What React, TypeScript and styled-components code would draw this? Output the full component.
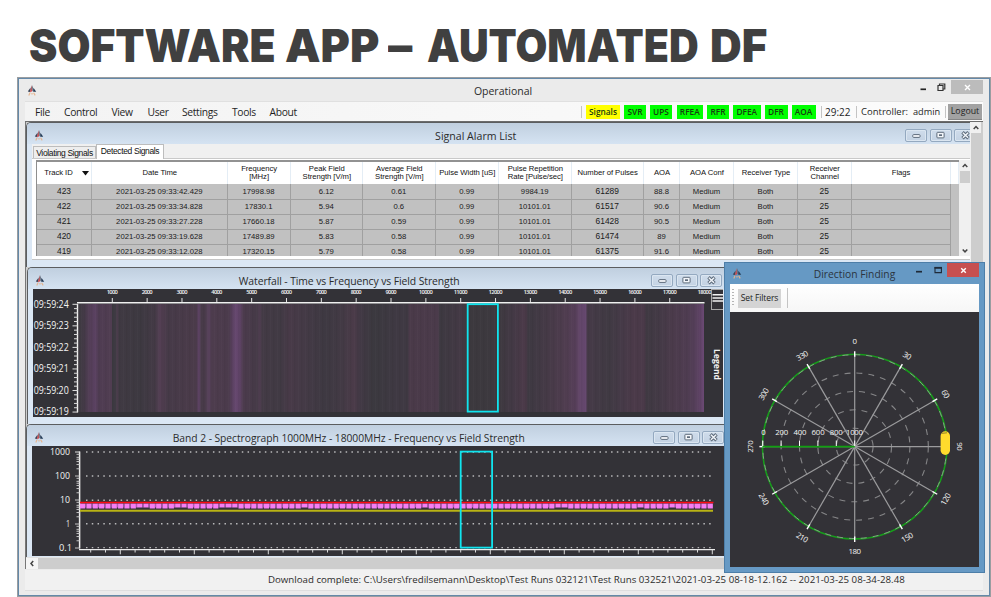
import React from "react";
import styled, { createGlobalStyle } from "styled-components";

const GlobalStyle = createGlobalStyle`
  * { box-sizing: border-box; }
  html, body { margin: 0; padding: 0; background: #fff; }
  body { width: 991px; height: 597px; overflow: hidden; font-family: "Open Sans", "Noto Sans", sans-serif; color: #2b2b2b; }
  svg { display: block; flex: none; }
`;

/* ---------- page ---------- */
const Slide = styled.div`
  width: 991px;
  height: 597px;
  display: flex;
  flex-direction: column;
  position: relative;
  overflow: hidden;
`;
const Heading = styled.h1`
  margin: 0;
  height: 77px;
  padding: 17px 0 0 29px;
  display: flex;
  font: 900 45px/58px Inter, sans-serif;
  color: #404040;
  white-space: pre;
`;
const Word = styled.span<{ $w: number; $scale: number }>`
  flex: none;
  width: ${(p) => p.$w}px;
  transform-origin: 0 50%;
  transform: scaleX(${(p) => p.$scale});
`;
const AppFrame = styled.div`
  margin-left: 17px;
  width: 974px;
  height: 520px;
  border: 1px solid #9a9da0;
  border-right-width: 2px;
  outline: 1px solid #6489a9;
  outline-offset: -2px;
  background: #ebebeb;
  padding: 2px 6px 0 7px;
  display: flex;
  flex-direction: column;
`;
const TitleBar = styled.div`
  height: 21px;
  display: flex;
  align-items: center;
`;
const CenterTitle = styled.div<{ $shift?: number; $size?: number; $space?: number; $top?: number }>`
  flex: 1;
  text-align: center;
  white-space: nowrap;
  font-size: ${(p) => p.$size ?? 10.6}px;
  letter-spacing: ${(p) => p.$space ?? 0}px;
  padding-left: ${(p) => p.$shift ?? 0}px;
  padding-top: ${(p) => p.$top ?? 0}px;
  line-height: 16px;
`;
const MainControls = styled.div`
  display: flex;
  align-self: flex-start;
`;
const MainClose = styled.div`
  width: 32px;
  height: 14px;
  background: #bcbcbc;
  display: grid;
  place-items: center;
`;
const MenuBar = styled.div`
  height: 20px;
  display: flex;
  align-items: center;
  background: linear-gradient(90deg, #f3f3f3, #fcfcfc);
  border-top: 1px solid #e0e0e0;
  padding-right: 1px;
  font-size: 10.3px;
  letter-spacing: -0.33px;
  color: #1f1f1f;
`;
const MenuItems = styled.div`
  display: grid;
  grid-template-columns: 29px 47.5px 36px 34.5px 50px 37.5px auto;
  padding-left: 10px;
  flex: 1;
`;
const StatusTools = styled.div`
  display: flex;
  align-items: center;
  height: 19px;
  letter-spacing: 0;
`;
const Badge = styled.span<{ $w: number; $gap: number; $warn?: boolean }>`
  width: ${(p) => p.$w}px;
  margin-right: ${(p) => p.$gap}px;
  height: 14px;
  background: ${(p) => (p.$warn ? "#ffff00" : "#00ff00")};
  color: #173d10;
  font-size: 8.3px;
  font-weight: 600;
  line-height: 13.5px;
  text-align: center;
  white-space: nowrap;
`;
const Divider = styled.i<{ $r: number; $h?: number }>`
  width: 1px;
  height: ${(p) => p.$h ?? 12}px;
  background: #c4c4c4;
  margin-right: ${(p) => p.$r}px;
`;
const ToolText = styled.span<{ $w: number; $size?: number }>`
  width: ${(p) => p.$w}px;
  font-size: ${(p) => p.$size ?? 10}px;
  white-space: nowrap;
`;
const Logout = styled.button`
  border: 0;
  border-bottom: 1px solid #858585;
  padding: 0;
  width: 34px;
  height: 16px;
  background: #a2a2a2;
  color: #222;
  font: 500 8.8px/14px "Open Sans", sans-serif;
`;

/* ---------- workspace ---------- */
const Workspace = styled.div`
  height: 448px;
  display: flex;
  background: #cdcdcd;
  border-top: 1px solid #6c6c6c;
  border-left: 1px solid #777;
`;
const Stack = styled.div`
  width: 944px;
  height: 447px;
  overflow: hidden;
  display: flex;
  flex-direction: column;
`;
const VScroll = styled.div`
  width: 11px;
  flex: none;
  align-self: stretch;
  background: #f0f0f0;
  display: flex;
  flex-direction: column;
  align-items: center;
`;
const Thumb = styled.i<{ $h?: number }>`
  width: 10px;
  background: #cdcdcd;
  ${(p) => (p.$h ? `height: ${p.$h}px;` : "flex: 1;")}
`;
const Track = styled.i`
  flex: 1;
`;
const HScroll = styled.div`
  height: 12px;
  flex: none;
  display: flex;
  background: #cdcdcd;
  border-top: 1px solid #e3e3e3;
`;
const HArrow = styled.div`
  width: 12px;
  height: 11px;
  background: #f5f5f5;
  display: grid;
  place-items: center;
`;
const Child = styled.section<{ $h: number; $w?: number; $ml?: number }>`
  height: ${(p) => p.$h}px;
  width: ${(p) => p.$w ?? 946}px;
  margin-left: ${(p) => p.$ml ?? 0}px;
  flex: none;
  display: flex;
  flex-direction: column;
  border: solid #5b5d5f;
  border-width: 1px 0 0 1px;
  border-top-left-radius: 5px;
  background: #dbe7f4;
  padding: 0 0 0 5px;
`;
const ChildTitle = styled.header<{ $h?: number }>`
  height: ${(p) => p.$h ?? 21}px;
  flex: none;
  margin-left: -5px;
  padding-left: 7px;
  display: flex;
  align-items: center;
  background: linear-gradient(#c0cfdf, #d5e3f2);
  border-top-left-radius: 4px;

  & > svg {
    margin-top: 3px;
  }
`;
const ChildControls = styled.div<{ $mr: number }>`
  display: grid;
  grid-template-columns: repeat(3, 22px);
  gap: 2.3px;
  margin-right: ${(p) => p.$mr}px;
  margin-top: 3px;
`;
const ChildButton = styled.span`
  height: 13px;
  border: 1px solid #94a9c0;
  border-radius: 2px;
  background: linear-gradient(#cfdceb, #c3d2e3);
  box-shadow: inset 0 0 0 1px #dbe6f1;
  display: grid;
  place-items: center;
`;

/* ---------- signal table ---------- */
const Tabs = styled.div`
  height: 15px;
  display: flex;
  align-items: flex-end;
  background: #f0f0f0;
  border-bottom: 1px solid #c9c9c9;
  padding-left: 1px;
`;
const Tab = styled.div<{ $active?: boolean; $w: number }>`
  width: ${(p) => p.$w}px;
  height: ${(p) => (p.$active ? 15 : 12)}px;
  margin-bottom: ${(p) => (p.$active ? -1 : 0)}px;
  border: 1px solid #bdbdbd;
  border-bottom: 0;
  background: ${(p) => (p.$active ? "#fff" : "#eee")};
  color: #111;
  font: 8.5px/13px "Liberation Sans", sans-serif;
  letter-spacing: -0.36px;
  text-align: center;
  white-space: nowrap;
`;
const TabBody = styled.div`
  height: 101px;
  background: #fff;
  padding: 1px 0 3px 4px;
  border-bottom: 1px solid #c5c5c5;
  display: flex;
`;
const Grid = styled.div`
  width: 923px;
  height: 96px;
  border-top: 2px solid #929292;
  border-left: 1px solid #8f8f8f;
  background: #c1c1c1;
  overflow: hidden;
`;
const COLS = "55px 135.6px 63px 72.4px 72.6px 63.4px 72.6px 72.4px 36px 54px 64px 53.6px 99px 1fr";
const GridHead = styled.div`
  display: grid;
  grid-template-columns: ${COLS};
  height: 22px;
  background: #fff;
`;
const HeadCell = styled.div<{ $sorted?: boolean }>`
  display: flex;
  align-items: center;
  justify-content: center;
  gap: 9px;
  padding-left: ${(p) => (p.$sorted ? 5 : 1)}px;
  text-align: center;
  white-space: pre;
  border-right: 1px solid #e4edf5;
  font: 7.7px/8px "Liberation Sans", sans-serif;
  letter-spacing: -0.05px;
  color: #111;
`;
const GridRow = styled.div`
  display: grid;
  grid-template-columns: ${COLS};
  height: 15px;
`;
const Cell = styled.div<{ $big?: boolean; $last?: boolean }>`
  border: solid #a0a0a0;
  border-width: 0 ${(p) => (p.$last ? 0 : 1)}px ${(p) => (p.$last ? 0 : 1)}px 0;
  text-align: center;
  white-space: nowrap;
  font: ${(p) => (p.$big ? 8.4 : 7.7)}px/15px "Liberation Sans", sans-serif;
  color: #1a1a1a;
`;

const StatusBar = styled.footer`
  height: 21px;
  margin-top: 1px;
  background: #f1f1f1;
  border-bottom: 1px solid #dedede;
  padding-left: 243px;
  display: flex;
  align-items: center;
`;
const StatusText = styled.div`
  white-space: nowrap;
  font-size: 9.7px;
  line-height: 16px;
`;

/* ---------- floating direction window ---------- */
const Floating = styled.aside`
  position: absolute;
  left: 724px;
  top: 262px;
  width: 261px;
  height: 311px;
  background: #6699c4;
  border: 1px solid #4d7ea8;
  padding: 0 5px 5px;
  display: flex;
  flex-direction: column;
`;
const FloatTitle = styled.div`
  height: 21px;
  display: flex;
  align-items: center;
  color: #2b3440;
`;
const FloatClose = styled.span`
  width: 32px;
  height: 14px;
  background: #c75050;
  display: grid;
  place-items: center;
`;
const FloatControls = styled.div`
  align-self: flex-start;
  display: flex;
`;
const FloatTools = styled.div`
  height: 28px;
  background: linear-gradient(#fff, #f6f6f6);
  display: flex;
  align-items: center;
  padding-left: 2px;
  gap: 4px;
`;
const Grip = styled.i`
  width: 2px;
  height: 18px;
  background: repeating-linear-gradient(#b5b5b5 0 1.5px, transparent 1.5px 3px);
`;
const FilterButton = styled.button`
  width: 43px;
  height: 19px;
  border: 0;
  padding: 0;
  background: #d4d4d4;
  color: #222;
  font: 8.5px/18px "Open Sans", sans-serif;
  letter-spacing: -0.1px;
  white-space: nowrap;
  margin-right: 2px;
`;

/* ---------- small drawings ---------- */
const Logo = ({ pad = 0 }: { pad?: number }) => (
  <svg width={10 + pad} height="11" viewBox={`${-pad} 0 ${10 + pad} 11`}>
    <path d="M5 0 3 5 4.4 6.8 5 4.2Z" fill="#a6646b" />
    <path d="M3.6 2.6 0.8 6.6 3 7Z" fill="#3a4458" />
    <path d="M5 0 7 5 5.4 6.4Z" fill="#5b6474" />
    <path d="M6.6 3 9.2 6.8 6.2 6.8Z" fill="#223a55" />
    <path d="M4.2 3.2 2.8 7.4 5.2 6Z" fill="#d4474a" />
    <path d="M3 7.8 1.8 10.4M5 8v1.4M6.6 7.8 8.2 10.4" stroke="#e6b48d" strokeWidth="1.1" fill="none" />
  </svg>
);
const CHEVRONS = {
  up: "M1.7 7 4 4.6 6.3 7",
  down: "M1.7 4.4 4 6.8 6.3 4.4",
  left: "M5.2 3 3 5.5 5.2 8",
};
const Chevron = ({ d }: { d: keyof typeof CHEVRONS }) => (
  <svg width="8" height="11" viewBox="0 0 8 11">
    <path d={CHEVRONS[d]} stroke="#444" strokeWidth="1.5" fill="none" />
  </svg>
);
const Controls = ({ mr }: { mr: number }) => (
  <ChildControls $mr={mr}>
    <ChildButton>
      <svg width="9" height="9" viewBox="0 0 9 9"><rect x="0.7" y="3.6" width="7.4" height="2.8" rx="1" fill="#f3f6fa" stroke="#5d6b7b" strokeWidth="1" /></svg>
    </ChildButton>
    <ChildButton>
      <svg width="9" height="9" viewBox="0 0 9 9"><rect x="0.9" y="1.3" width="7.2" height="5.6" rx="0.8" fill="#f3f6fa" stroke="#5d6b7b" strokeWidth="1" /><rect x="3" y="3.3" width="3" height="1.7" fill="#5d6b7b" /></svg>
    </ChildButton>
    <ChildButton>
      <svg width="9" height="9" viewBox="0 0 9 9"><path d="M1.5 1.3 7.5 7.2M7.5 1.3 1.5 7.2" stroke="#5d6b7b" strokeWidth="3.4" /><path d="M1.9 1.7 7.1 6.8M7.1 1.7 1.9 6.8" stroke="#f0f4f9" strokeWidth="1.5" /></svg>
    </ChildButton>
  </ChildControls>
);

const HEAT: [number, string][] = [
  [78, "#3c393f"], [84, "#443a47"], [90, "#543e58"], [95, "#5a4161"], [99, "#4f3c52"], [111.5, "#503d51"], [112.5, "#3c3a41"],
  [116, "#3f3a43"], [117, "#4d3c4d"], [119, "#403a43"], [140, "#3d3941"], [155, "#443a46"], [160, "#543f54"], [164, "#4c3b4c"],
  [168, "#463a48"], [196, "#4b3b4a"], [199, "#5f4366"], [201, "#483b49"], [205, "#493b4a"], [209, "#59425d"], [212, "#4d3c4d"],
  [229, "#4b3b4c"], [232, "#5a4160"], [236, "#66476f"], [240, "#5f4366"], [243, "#4c3b4d"], [257, "#453a47"], [260, "#523f53"],
  [262, "#433a45"], [280, "#413a44"], [290, "#483a48"], [305, "#443a46"], [325, "#3e3942"], [342, "#433a45"], [354, "#4b3b49"],
  [360, "#423945"], [374, "#3b393f"], [396, "#3f3943"], [408, "#3f3943"], [409, "#4a3a49"], [438, "#4b3b4b"], [440, "#3d3941"],
  [462, "#443945"], [467, "#3c393e"], [498, "#3d393f"], [512, "#433945"], [524, "#4b3a49"], [526, "#4a3a48"], [528, "#3e3942"],
  [548, "#463a47"], [566, "#503d50"], [576, "#573f5a"], [580, "#64476b"], [586, "#64466d"], [587, "#463a48"], [608, "#403a43"],
  [622, "#463a48"], [634, "#4b3a49"], [645, "#4a3a49"], [646, "#3f3942"], [662, "#453a47"], [672, "#4b3b4b"], [690, "#503d53"],
  [698, "#5a4160"], [704, "#6b4974"],
];

const Waterfall = () => (
  <svg width="690" height="128" viewBox="33 289 690 128">
    <defs>
      <linearGradient id="heat" gradientUnits="userSpaceOnUse" x1="78" x2="704" y1="0" y2="0">
        {HEAT.map(([x, c]) => <stop key={x} offset={(x - 78) / 626} stopColor={c} />)}
      </linearGradient>
      <pattern id="bands" width="7" height="4" patternUnits="userSpaceOnUse">
        <rect width="1.5" height="4" fill="#000" opacity=".04" />
        <rect x="4" width="1" height="4" fill="#fff" opacity=".015" />
      </pattern>
    </defs>
    <rect x="33" y="289" width="690" height="128" fill="#333237" />
    <rect x="78" y="304" width="626" height="108" fill="url(#heat)" />
    <rect x="78" y="304" width="626" height="108" fill="url(#bands)" />
    <path d="M77 302.8H704.5" stroke="#f0f0f0" strokeWidth="1.5" />
    {Array.from({ length: 17 }, (_, i) => {
      const x = 112.3 + i * 34.84;
      return <path key={i} d={`M${x} 298V302`} stroke="#e5e5e5" strokeWidth="1" />;
    })}
    {Array.from({ length: 18 }, (_, i) => (
      <text key={i} x={112.3 + i * 34.84} y="294.2" fontSize="5.8" fontFamily="Open Sans" fontWeight="600" fill="#f2f2f2" textAnchor="middle" textLength={i < 9 ? 11 : 14}>
        {(i + 1) * 1000}
      </text>
    ))}
    <path d="M77.5 304V412.3" stroke="#f0f0f0" strokeWidth="1.4" />
    {Array.from({ length: 26 }, (_, i) => (
      <path key={i} d={`M${i % 5 ? 74 : 72.5} ${304.3 + i * 4.31}H78`} stroke="#dcdcdc" strokeWidth="1" />
    ))}
    {[24, 23, 22, 21, 20, 19].map((s, i) => (
      <text key={s} x="33.7" y={307.6 + i * 21.55} fontSize="10" fontFamily="Open Sans" fill="#f4f4f4" textLength="35" lengthAdjust="spacingAndGlyphs">{`09:59:${s}`}</text>
    ))}
    <rect x="467.7" y="304.2" width="30.2" height="107.4" fill="none" stroke="#10e4ee" strokeWidth="1.8" />
    <rect x="711.5" y="289.5" width="13" height="20" fill="none" stroke="#a8a8a8" />
    <path d="M712.5 294.7H723M712.5 297.9H723M712.5 301H723" stroke="#f2f2f2" strokeWidth="1.5" />
    <text transform="translate(713.7 349) rotate(90)" fontSize="9" fontWeight="700" fontFamily="Open Sans" fill="#f2f2f2" textLength="31" lengthAdjust="spacingAndGlyphs">Legend</text>
  </svg>
);

const Spectrograph = () => (
  <svg width="692" height="110" viewBox="32 446 692 110">
    <rect x="32" y="446" width="692" height="110" fill="#333237" />
    {[452, 476, 500.3, 523.8, 547.6].map((y) => (
      <path key={y} d={`M86 ${y}H714`} stroke="#b9b9bb" strokeWidth="1.4" strokeDasharray="1.5 4.27" />
    ))}
    <path d="M79.6 451.5V548.5" stroke="#eee" strokeWidth="1.5" />
    {[0, 1, 2, 3].flatMap((k) =>
      [1, 2, 3, 4, 5, 6, 8].map((m) => (
        <path key={`${k}-${m}`} d={`M${m === 1 ? 75 : 76.5} ${452 + k * 24 - Math.log10(m) * 24 + 24}H80`} stroke="#d5d5d5" strokeWidth=".9" />
      ))
    )}
    <path d="M75 452H80" stroke="#ddd" />
    {["1000", "100", "10", "1", "0.1"].map((t, i) => (
      <text key={t} x={i === 4 ? 72 : 70} y={455.2 + i * 24.05} fontSize="9.8" fontFamily="Open Sans" fill="#f2f2f2" textAnchor="end" textLength={[20, 15, 10, 4, 13][i]} lengthAdjust="spacingAndGlyphs">{t}</text>
    ))}
    {Array.from({ length: 100 }, (_, i) => (
      <rect key={i} x={80 + i * 6.34} y={503.5} width="5.2" height={[9, 10, 15, 16, 22, 23, 24, 35, 54, 75, 76, 88, 93].includes(i) ? 4 : 5} fill="#f57df2" />
    ))}
    {Array.from({ length: 100 }, (_, i) => (
      <rect key={i} x={85.2 + i * 6.34} y={503.5} width="1.14" height={i === 99 ? 0 : 4} fill="#b35bb4" />
    ))}
    <path d="M80 502.6H713.5" stroke="#ff0b12" strokeWidth="1.5" />
    <path d="M80 510.8H713" stroke="#b9b315" strokeWidth="2" />
    <path d="M79 549.6H715" stroke="#eaeaea" strokeWidth="1.2" />
    {Array.from({ length: 43 }, (_, i) => (
      <path key={i} d={`M${90.7 + i * 14.8} 550V${i % 5 === 2 ? 554.3 : 552.5}`} stroke="#dadada" strokeWidth="1" />
    ))}
    <rect x="460.7" y="451.6" width="31.4" height="96" fill="none" stroke="#10e4ee" strokeWidth="1.8" />
  </svg>
);

const CX = 854.7, CY = 446.6, R = 92.3;
const at = (deg: number, r: number) => {
  const a = (deg * Math.PI) / 180;
  return `${(CX + Math.sin(a) * r).toFixed(2)} ${(CY - Math.cos(a) * r).toFixed(2)}`;
};
const Polar = () => (
  <svg width="249" height="255" viewBox="730 312 249 255">
    <rect x="730" y="312" width="249" height="255" fill="#333237" />
    {[1, 2, 3, 4].map((k) => (
      <circle key={k} cx={CX} cy={CY} r={k * 18.4} fill="none" stroke="#858587" strokeWidth="1.1" strokeDasharray="6 6" />
    ))}
    {Array.from({ length: 12 }, (_, i) => (
      <path key={i} d={`M${at(0, 0)}L${at(i * 30, R)}`} stroke="#9b9b9d" strokeWidth="1.2" />
    ))}
    <circle cx={CX} cy={CY} r={R} fill="none" stroke="#179c1b" strokeWidth="1.6" />
    <circle cx={CX} cy={CY} r={R - 0.4} fill="none" stroke="#8fa38f" strokeWidth=".9" strokeDasharray="6 6" />
    {Array.from({ length: 12 }, (_, i) => (
      <path key={i} d={`M${at(i * 30, R - 2.5)}L${at(i * 30, R + 3)}`} stroke="#fff" strokeWidth="1.4" />
    ))}
    <path d={`M${CX - R} ${CY}H${CX}`} stroke="#10a010" strokeWidth="1.7" />
    {[0, 1, 2, 3, 4, 5].map((k) => (
      <g key={k}>
        <path d={`M${762.7 + k * 18.4} 440.5V446`} stroke="#fff" strokeWidth="1" />
        <text x={763.5 + k * 18.2} y="434.7" fontSize="7.8" fontFamily="Open Sans" fill="#f4f4f4" textAnchor="middle" textLength={k === 0 ? 4 : k === 5 ? 17 : 13}>{k * 200}</text>
      </g>
    ))}
    {Array.from({ length: 12 }, (_, i) => {
      const a = i * 30;
      const [x, y] = at(a, 105).split(" ");
      const turn = a === 180 ? 0 : a > 90 && a < 270 ? a + 180 : a;
      return (
        <text key={i} transform={`translate(${x} ${y}) rotate(${turn})`} y="2.8" fontSize="7.9" fontFamily="Open Sans" fill="#f4f4f4" textAnchor="middle" textLength={a === 0 ? 4.5 : a < 100 ? 8.5 : 12.5}>{a}</text>
      );
    })}
    <path d="M945.3 436V450.2" stroke="#ffdb2d" strokeWidth="9.4" strokeLinecap="round" />
    <path d="M942 433.3 947 432.8" stroke="#82752d" strokeWidth=".9" />
  </svg>
);

/* ---------- data ---------- */
const HEADERS = ["Track ID", "Date Time", "Frequency\n[MHz]", "Peak Field\nStrength [V/m]", "Average Field\nStrength [V/m]", "Pulse Width [uS]", "Pulse Repetition\nRate [Pulse/sec]", "Number of Pulses", "AOA", "AOA Conf", "Receiver Type", "Receiver\nChannel", "Flags", ""];
const ROWS = [
  ["423", "2021-03-25 09:33:42.429", "17998.98", "6.12", "0.61", "0.99", "9984.19", "61289", "88.8"],
  ["422", "2021-03-25 09:33:34.828", "17830.1", "5.94", "0.6", "0.99", "10101.01", "61517", "90.6"],
  ["421", "2021-03-25 09:33:27.228", "17660.18", "5.87", "0.59", "0.99", "10101.01", "61428", "90.5"],
  ["420", "2021-03-25 09:33:19.628", "17489.89", "5.83", "0.58", "0.99", "10101.01", "61474", "89"],
  ["419", "2021-03-25 09:33:12.028", "17320.15", "5.79", "0.58", "0.99", "10101.01", "61375", "91.6"],
].map((r) => [...r, "Medium", "Both", "25", "", ""]);
const BADGES: [string, number, number][] = [
  ["Signals", 34, 4], ["SVR", 22, 4], ["UPS", 22, 4.5], ["RFEA", 26.5, 4], ["RFR", 22, 4], ["DFEA", 27.5, 4], ["DFR", 23, 4], ["AOA", 24, 5],
];
const HEADING: [string, number, number][] = [
  ["SOFTWARE", 255.5, 0.947], ["APP", 103.5, 0.995], ["–", 38.5, 1.08], ["AUTOMATED", 283.5, 0.914], ["DF", 60, 0.975],
];

export default function App() {
  return (
    <Slide>
      <GlobalStyle />
      <Heading>
        {HEADING.map(([t, w, s]) => <Word key={t} $w={w} $scale={s}>{t}</Word>)}
      </Heading>
      <AppFrame>
        <TitleBar>
          <Logo pad={2} />
          <CenterTitle $shift={59} $size={10.5}>Operational</CenterTitle>
          <MainControls>
            <svg width="41" height="15" viewBox="0 0 41 15">
              <path d="M10.5 9.3H16" stroke="#222" strokeWidth="1.7" />
              <path d="M28 5.5H33V10.5H28ZM29.5 5V4H34.8V9H33.5" stroke="#333" strokeWidth="1.2" fill="none" />
            </svg>
            <MainClose>
              <svg width="7" height="7" viewBox="0 0 7 7"><path d="M1 1 6 6M6 1 1 6" stroke="#fff" strokeWidth="1.4" /></svg>
            </MainClose>
          </MainControls>
        </TitleBar>
        <MenuBar>
          <MenuItems>
            {["File", "Control", "View", "User", "Settings", "Tools", "About"].map((m) => <span key={m}>{m}</span>)}
          </MenuItems>
          <StatusTools>
            <Divider $r={4} />
            {BADGES.map(([t, w, g]) => <Badge key={t} $w={w} $gap={g} $warn={t === "Signals"}>{t}</Badge>)}
            <Divider $r={3.5} />
            <ToolText $w={31}>29:22</ToolText>
            <Divider $r={4} />
            <ToolText $w={52} $size={9.5}>Controller:</ToolText>
            <ToolText $w={32} $size={9.2}>admin</ToolText>
            <Divider $r={2} />
            <Logout>Logout</Logout>
          </StatusTools>
        </MenuBar>
        <Workspace>
          <Stack>
            <Child $h={145}>
              <ChildTitle>
                <Logo />
                <CenterTitle $shift={2} $top={4}>Signal Alarm List</CenterTitle>
                <Controls mr={-4} />
              </ChildTitle>
              <Tabs>
                <Tab $w={63}>Violating Signals</Tab>
                <Tab $w={68} $active>Detected Signals</Tab>
              </Tabs>
              <TabBody>
                <Grid>
                  <GridHead>
                    {HEADERS.map((h, i) => (
                      <HeadCell key={i} $sorted={i === 0}>
                        {h}
                        {i === 0 && <svg width="7" height="5" viewBox="0 0 7 5"><path d="M0 0H7L3.5 4.5Z" fill="#111" /></svg>}
                      </HeadCell>
                    ))}
                  </GridHead>
                  {ROWS.map((r) => (
                    <GridRow key={r[0]}>
                      {r.map((c, i) => <Cell key={i} $big={i === 0 || i === 7 || i === 11} $last={i === 13}>{c}</Cell>)}
                    </GridRow>
                  ))}
                </Grid>
                <VScroll>
                  <Chevron d="up" />
                  <Thumb $h={12} />
                  <Track />
                  <Chevron d="down" />
                </VScroll>
              </TabBody>
            </Child>
            <Child $h={157} $ml={1} $w={702}>
              <ChildTitle $h={21}>
                <Logo />
                <CenterTitle $shift={2} $top={4} $size={10.4} $space={-0.09}>Waterfall - Time vs Frequency vs Field Strength</CenterTitle>
                <Controls mr={7} />
              </ChildTitle>
              <Waterfall />
            </Child>
            <Child $h={133} $w={704}>
              <ChildTitle>
                <Logo />
                <CenterTitle $top={4} $size={10.3} $space={-0.05}>Band 2 - Spectrograph 1000MHz - 18000MHz - Frequency vs Field Strength</CenterTitle>
                <Controls mr={6} />
              </ChildTitle>
              <Spectrograph />
            </Child>
            <HScroll><HArrow><Chevron d="left" /></HArrow></HScroll>
          </Stack>
          <VScroll>
            <Chevron d="up" />
            <Thumb />
          </VScroll>
        </Workspace>
        <StatusBar>
          <StatusText>Download complete: C:\Users\fredilsemann\Desktop\Test Runs 032121\Test Runs 032521\2021-03-25 08-18-12.162 -- 2021-03-25 08-34-28.48</StatusText>
        </StatusBar>
      </AppFrame>
      <Floating>
        <FloatTitle>
          <Logo pad={2} />
          <CenterTitle $shift={57} $size={10.3} $top={1}>Direction Finding</CenterTitle>
          <FloatControls>
            <svg width="37" height="14" viewBox="0 0 37 14">
              <path d="M6 8.7H12" stroke="#1f2a38" strokeWidth="1.7" />
              <path d="M25 4.6H31.4V9.6H25Z" stroke="#1f2a38" strokeWidth="1.1" fill="none" />
              <path d="M24.5 4.8H32" stroke="#1f2a38" strokeWidth="1.8" />
            </svg>
            <FloatClose>
              <svg width="7" height="7" viewBox="0 0 7 7"><path d="M1.2 1.2 5.8 5.8M5.8 1.2 1.2 5.8" stroke="#fff" strokeWidth="1.4" /></svg>
            </FloatClose>
          </FloatControls>
        </FloatTitle>
        <FloatTools>
          <Grip />
          <FilterButton>Set Filters</FilterButton>
          <Divider $r={0} $h={20} />
        </FloatTools>
        <Polar />
      </Floating>
    </Slide>
  );
}
